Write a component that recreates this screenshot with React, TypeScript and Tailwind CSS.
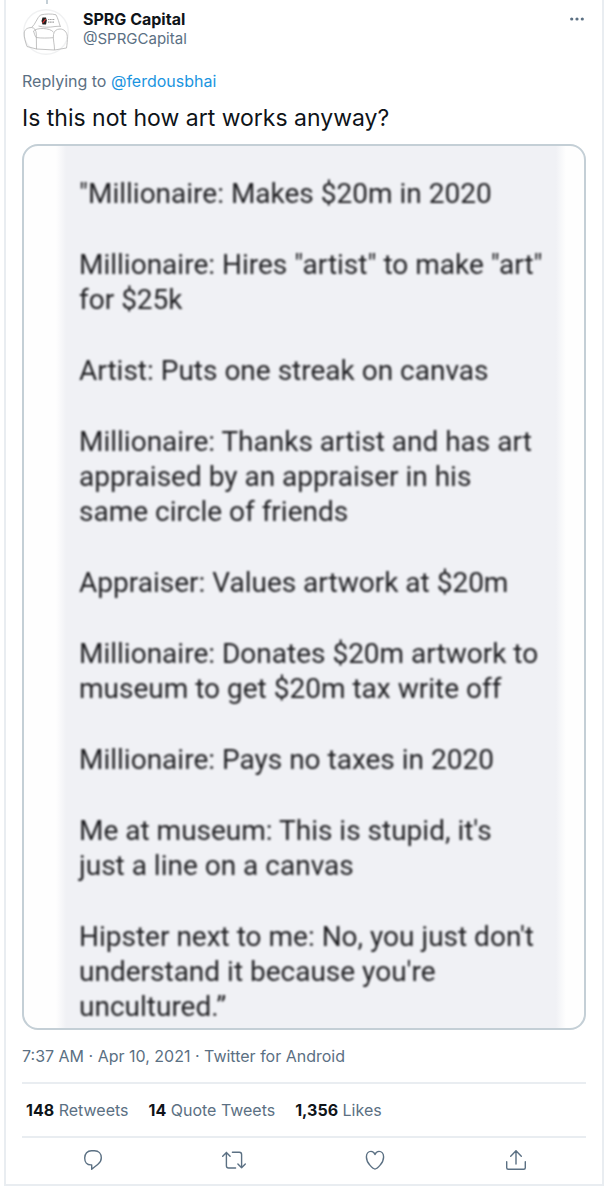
import type { ReactNode } from "react";

const paragraphs = [
  ["\"Millionaire: Makes $20m in 2020"],
  ["Millionaire: Hires \"artist\" to make \"art\"", "for $25k"],
  ["Artist: Puts one streak on canvas"],
  [
    "Millionaire: Thanks artist and has art",
    "appraised by an appraiser in his",
    "same circle of friends",
  ],
  ["Appraiser: Values artwork at $20m"],
  ["Millionaire: Donates $20m artwork to", "museum to get $20m tax write off"],
  ["Millionaire: Pays no taxes in 2020"],
  ["Me at museum: This is stupid, it's", "just a line on a canvas"],
  [
    "Hipster next to me: No, you just don't",
    "understand it because you're",
    "uncultured.”",
  ],
];

const stats = [
  { count: "148", label: "Retweets" },
  { count: "14", label: "Quote Tweets" },
  { count: "1,356", label: "Likes" },
];

function Icon({ children }: { children: ReactNode }) {
  return (
    <svg
      viewBox="0 0 24 24"
      className="size-6"
      fill="none"
      stroke="currentColor"
      strokeWidth="1.4"
      strokeLinecap="round"
      strokeLinejoin="round"
      aria-hidden="true"
    >
      {children}
    </svg>
  );
}

const actions = [
  {
    label: "Reply",
    icon: (
      <path d="M10.7 21.2v-4.3h-.9C6 16.9 3.7 14 3.7 10c0-4.4 2.7-7.3 6.8-7.3h3c4.1 0 6.8 2.9 6.8 7 0 2.6-1.2 4.7-3.1 6.3-1.9 1.6-4.3 3.3-6.5 5.200z" />
    ),
  },
  {
    label: "Retweet",
    icon: (
      <>
        <path d="M.7 8.300l3.700-3.800 3.700 3.800M4.400 4.500v13.300c0 1.300.9 2.200 2.200 2.200h7" />
        <path d="M23.300 15.900l-3.700 3.800-3.700-3.800M19.600 19.700V6.500c0-1.300-.9-2.200-2.200-2.200h-7" />
      </>
    ),
  },
  {
    label: "Like",
    icon: (
      <path d="M12 21c-1.600 0-8.600-5.600-8.600-12.100C3.400 5.800 5.300 3.400 8 3.400c2.100 0 3.400 1.500 4 3.200.6-1.700 1.900-3.200 4-3.200 2.700 0 4.600 2.400 4.600 5.500C20.600 15.400 13.600 21 12 21z" />
    ),
  },
  {
    label: "Share",
    icon: (
      <path d="M12 16V2.800M6.700 8.200L12 2.800l5.300 5.400M2.700 13.700v6c0 .9.600 1.500 1.500 1.500h15.600c.9 0 1.500-.6 1.500-1.500v-6" />
    ),
  },
];

function Avatar() {
  return (
    <svg viewBox="0 0 46 46" className="size-[46px] shrink-0" fill="none" aria-hidden="true">
      <circle cx="23" cy="23" r="22.3" fill="#fff" stroke="#f0f1f2" strokeWidth="1.4" />
      <g stroke="#b2b2b2" strokeWidth=".8" strokeLinejoin="round">
        <path d="M8.5 18.5c4-3 5.500-10 9-12.500 4.500-1.200 11.500-1.400 15.500-.2 2 3.500 3 8 4.500 12.200" />
        <path d="M4 37.500C2.500 33 .9 28 1.200 24c.3-3.500 3-5.300 7.300-5.500 3.200.3 4.700 3 4.800 6.500l.2 15z" />
        <path d="M31.500 41c.2-5-1.800-11-1-15.500.6-3.600 3-5.500 6.500-5.500 4 0 7 3 7.300 7.500.3 4-.3 8-.8 11.500z" />
        <path d="M10.500 22c3-3.500 16.500-3.500 20 1.200M10.500 22c1 3 1.500 5 2.600 6.500 5 .8 12.500.6 17 .2M13.300 40l18.200 1M15.500 17c5 1.500 11 1.500 16.500.5l5-.3" />
      </g>
      <path d="M19.500 8.500h3.500l.8 3-.8 4h-3.500l-1-3.500z" fill="#222" />
      <path d="M19.600 13.800l3-3.600" stroke="#d33" strokeWidth="1.2" />
      <path d="M25 10.500h6.500M25 13.200h6" stroke="#999" strokeWidth="1.2" strokeDasharray="1.2 .5" />
    </svg>
  );
}

export default function App() {
  return (
    <div className="bg-white pr-0.5 pl-1 font-['Inter',sans-serif] text-base leading-5 text-[#5b7083]">
      <article className="border-x-2 border-b-2 border-[#e9edf1] px-4">
        <div className="ml-6 h-1 w-0.5 bg-[#c4cfd6]" />

        <header className="flex items-start pt-[5px]">
          <div className="pl-px">
            <Avatar />
          </div>
          <div className="ml-3.5 flex-1">
            <div className="font-bold text-[#0f1419]">SPRG Capital</div>
            <div className="text-[15px] leading-5">@SPRGCapital</div>
          </div>
          <button type="button" aria-label="More" className="mt-0.5 cursor-pointer">
            <svg viewBox="0 0 18 16" className="h-4 w-[18px]" fill="currentColor" aria-hidden="true">
              <circle cx="3.7" cy="8" r="1.6" />
              <circle cx="9" cy="8" r="1.6" />
              <circle cx="14.3" cy="8" r="1.6" />
            </svg>
          </button>
        </header>

        <p className="mt-4">
          Replying to{" "}
          <a href="#ferdousbhai" className="text-[#1b95e0]">
            @ferdousbhai
          </a>
        </p>

        <p className="mt-[13px] text-[23px] leading-7 text-[#0f1419]">Is this not how art works anyway?</p>

        <div className="mt-3 overflow-hidden rounded-2xl border-2 border-[#c4cfd6] bg-[#fefefe]">
          <div className="mr-[18px] ml-8 bg-linear-to-r from-[#fefefe] via-[#f0f1f5] via-2% to-[#f0f1f5]">
            <div className="bg-linear-to-l from-[#fefefe] to-transparent to-2% pt-[30px] pb-1 pl-[23px] font-['Roboto',sans-serif] text-[28px] leading-[35px] text-[#1e1e21]">
              <div className="flex flex-col gap-9 whitespace-nowrap blur-[1px]">
                {paragraphs.map((lines) => (
                  <p key={lines[0]}>
                    {lines.map((line) => (
                      <span key={line} className="block">
                        {line}
                      </span>
                    ))}
                  </p>
                ))}
              </div>
            </div>
          </div>
        </div>

        <p className="mt-4">7:37 AM · Apr 10, 2021 · Twitter for Android</p>

        <div className="mt-4 flex gap-5 border-y-2 border-[#e9edf1] px-1 py-4">
          {stats.map((stat) => (
            <a key={stat.label} href="#stats">
              <span className="font-bold text-[#0f1419]">{stat.count}</span> {stat.label}
            </a>
          ))}
        </div>

        <div className="grid grid-cols-4 justify-items-center pt-2.5 pb-3">
          {actions.map((action) => (
            <button key={action.label} type="button" aria-label={action.label} className="cursor-pointer">
              <Icon>{action.icon}</Icon>
            </button>
          ))}
        </div>
      </article>
    </div>
  );
}
